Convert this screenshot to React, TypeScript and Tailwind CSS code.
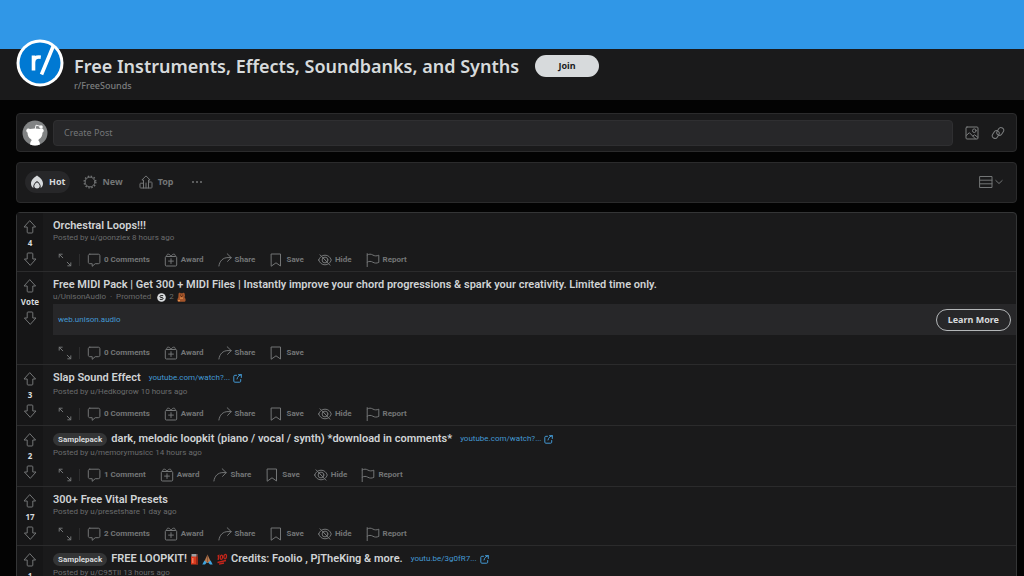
import type { ReactNode } from "react";

type IconProps = { className?: string };

function Svg({ className, children, box = "0 0 14 14" }: IconProps & { children: ReactNode; box?: string }) {
  return (
    <svg
      viewBox={box}
      className={className}
      fill="none"
      stroke="currentColor"
      strokeWidth={1}
      strokeLinejoin="round"
      strokeLinecap="round"
      aria-hidden="true"
    >
      {children}
    </svg>
  );
}

const ArrowUp = ({ className }: IconProps) => (
  <Svg className={className}>
    <path d="M7 .9 12.6 7H9.8v5.2c0 .5-.3.8-.8.8H5c-.5 0-.8-.3-.8-.8V7H1.4Z" />
  </Svg>
);

const ArrowDown = ({ className }: IconProps) => (
  <Svg className={className}>
    <path d="M7 13.1 1.4 7h2.8V1.8c0-.5.3-.8.8-.8h4c.5 0 .8.3.8.8V7h2.8Z" />
  </Svg>
);

const Expand = () => (
  <Svg className="size-3.5">
    <path d="M1.2 4.2v-3h3M1.2 1.2l3.600 3.600M12.800 9.800v3h-3M12.800 12.800 9.200 9.200" />
  </Svg>
);

const Comment = () => (
  <Svg className="size-3.5">
    <path d="M2.800 1.200h8.600c.9 0 1.500.6 1.500 1.500v6.500c0 .9-.6 1.500-1.500 1.500H8.200L5.200 13.300v-2.600H2.800c-.9 0-1.500-.6-1.500-1.500V2.700c0-.9.6-1.500 1.500-1.500Z" />
  </Svg>
);

const Gift = () => (
  <Svg className="size-3.5">
    <path d="M2.300 3.500h9.400c.6 0 1 .4 1 1V12c0 .6-.4 1-1 1H2.300c-.6 0-1-.4-1-1V4.500c0-.6.4-1 1-1ZM7 5.700v4.800M4.600 8.100h4.800M2.700 3.500C2.500 1.800 3.300 1 4.500 1.200S6.500 2.300 7 3.500M11.300 3.500c.2-1.700-.6-2.500-1.800-2.300S7.500 2.300 7 3.500" />
  </Svg>
);

const Share = () => (
  <Svg className="size-3.5">
    <path d="M9.200.8 13.200 4.600 9.600 8.400M13.200 4.600H10C5 4.600 1.600 7.800.9 13" />
  </Svg>
);

const Bookmark = () => (
  <Svg className="size-3.5">
    <path d="M2.500 1h9v12L7 9.800 2.500 13Z" />
  </Svg>
);

const Hide = () => (
  <Svg className="size-3.5">
    <path d="M.7 7C1.700 4 4 2.200 7 2.200S12.300 4 13.300 7C12.300 10 10 11.800 7 11.800S1.700 10 .7 7Z" />
    <circle cx="7" cy="7" r="2.900" />
    <path d="m2 1.800 10 10.400M5.600 5.400l3 3.200" />
  </Svg>
);

const Flag = () => (
  <Svg className="size-3.5">
    <path d="M1.200.6v13M1.200 2c2-1.200 3.700-1.100 5.600 0s3.800 1.200 6 .2v7.200c-2.200 1-4.100.9-6-.200s-3.600-1.200-5.600 0" />
  </Svg>
);

const External = () => (
  <Svg className="size-[9px]" box="0 0 9 9">
    <path d="M3.500 1.300H1.800c-.6 0-1 .4-1 1v4.900c0 .6.4 1 1 1h4.900c.6 0 1-.4 1-1V5.500M5.500.7h2.800v2.800M8.300.7C6.300 1.200 4.500 2.500 4 5" />
  </Svg>
);

const Flame = () => (
  <svg viewBox="0 0 14 14" className="size-3.5" aria-hidden="true">
    <path
      fill="currentColor"
      d="M7 .6c2.500 1.500 6 4.400 6 8 0 2-.9 3.500-2.400 4.500.7-2.700-.9-5-3.600-7-2.700 2-4.300 4.300-3.600 7C1.900 12.100 1 10.600 1 8.600c0-3.600 3.500-6.500 6-8Z"
    />
    <path fill="currentColor" d="M7 7.300c1.900 1.400 2.900 2.700 2.700 4.200-.2 1.200-1.200 2-2.700 2s-2.500-.8-2.700-2C4.100 10 5.100 8.700 7 7.300Z" />
  </svg>
);

const Burst = () => (
  <Svg className="size-3.5">
    <circle cx="7" cy="7" r="4.900" />
    <circle cx="7" cy="7" r="5.900" strokeWidth="1.300" strokeLinecap="butt" strokeDasharray="1.500 1.590" />
  </Svg>
);

const TopChart = () => (
  <Svg className="size-3.5">
    <path d="M4.500 8.200H1.700c-.4 0-.7.3-.7.700v3.400c0 .4.3.7.7.7h10.600c.4 0 .7-.3.7-.7V7.700c0-.4-.3-.7-.7-.7H9.500M4.500 13V5H2.900L7 .9 11.100 5H9.500v8M7 13V8" />
  </Svg>
);

const Picture = () => (
  <Svg className="size-3.5">
    <rect x="1" y="1" width="12" height="12" rx="1" />
    <circle cx="9.300" cy="4.700" r="1.800" />
    <path d="m1.200 9.500 3.200-2.800 6 6.100M8 10l1.600-1.200 3.200 2.500" />
  </Svg>
);

const Chain = () => (
  <Svg className="size-3.5">
    <g transform="rotate(-58 7 7)">
      <rect x=".4" y="3.200" width="8.200" height="5.400" rx="2.700" />
      <rect x="5.400" y="5.400" width="8.200" height="5.400" rx="2.700" />
    </g>
  </Svg>
);

const Layout = () => (
  <Svg className="size-3.5">
    <path d="M1 1.500h12v11H1zM1 5.200h12M1 8.800h12" />
  </Svg>
);

const Chevron = () => (
  <Svg className="size-2" box="0 0 8 8">
    <path d="m.8 2.500 3.200 3 3.200-3" />
  </Svg>
);

function Avatar() {
  return (
    <svg viewBox="0 0 26 26" className="size-[26px] shrink-0" role="img" aria-label="Your avatar">
      <circle cx="13" cy="13" r="12.500" fill="#818384" />
      <g fill="#fff">
        <path d="M4.300 10.200c.4-1.700 2.300-2.200 3.700-1.200 3-.7 7-.7 10 0 1.400-1 3.300-.5 3.700 1.200.2 1-.3 1.900-1.200 2.300 0 3.400-1.400 5.600-3.700 6.800l-.4 1.400c1 .7 1.500 1.900 1.500 3.700-3 1.400-6.800 1.400-9.800 0 0-1.800.5-3 1.500-3.700l-.4-1.400c-2.300-1.200-3.700-3.400-3.700-6.800-.9-.4-1.400-1.300-1.200-2.300Z" />
        <circle cx="19" cy="7" r="1.800" />
      </g>
      <path d="M13.200 9 14 5.200l4 1" fill="none" stroke="#fff" strokeWidth=".9" />
    </svg>
  );
}

function Action({ icon, label }: { icon: ReactNode; label: string }) {
  return (
    <button type="button" className="flex items-center gap-[3px]">
      {icon}
      <span>{label}</span>
    </button>
  );
}

type Post = {
  score: string;
  title: ReactNode;
  meta: ReactNode;
  comments: string;
  flair?: string;
  link?: string;
  promoted?: boolean;
};

function PostRow({ post, first }: { post: Post; first: boolean }) {
  return (
    <article className={first ? "flex" : "flex border-t border-[#2b2b2c]"}>
      <div className="flex w-[26px] shrink-0 flex-col items-center gap-1 bg-[#161617] pt-[7px] text-[#737576]">
        <button type="button" aria-label="Upvote">
          <ArrowUp className="size-3.5" />
        </button>
        <span className="font-['Noto_Sans'] text-[8px] leading-[10px] font-bold whitespace-nowrap text-[#d7dadc]">
          {post.score}
        </span>
        <button type="button" aria-label="Downvote">
          <ArrowDown className="size-3.5" />
        </button>
      </div>
      <div className="min-w-0 flex-1 pt-1.5 pl-2.5">
        <div className="flex h-3.5 items-center whitespace-nowrap">
          {post.flair && (
            <span className="mr-1 rounded-full bg-[#343536] px-[5px] text-[8px] leading-[13px] font-bold text-[#d7dadc]">
              {post.flair}
            </span>
          )}
          <h2 className="text-[11px] leading-[14px] font-semibold text-[#d0d3d5]">{post.title}</h2>
          {post.link && (
            <a href="#link" className="ml-2 flex items-center gap-[3px] text-[8px] leading-[14px] text-[#4399d4]">
              {post.link}
              <External />
            </a>
          )}
        </div>
        <p
          className={
            post.link
              ? "mt-0.5 flex h-2.5 items-center text-[8px] leading-[10px] whitespace-nowrap text-[#6a6c6d]"
              : "flex h-2.5 items-center text-[8px] leading-[10px] whitespace-nowrap text-[#6a6c6d]"
          }
        >
          {post.meta}
        </p>
        {post.promoted && (
          <div className="mt-0.5 mb-px flex h-[31px] items-center justify-between bg-[#272729] pr-[5px] pl-[5px]">
            <a href="#unison" className="text-[8px] text-[#4399d4]">
              web.unison.audio
            </a>
            <button
              type="button"
              className="h-[22px] rounded-full border border-[#b4b7b9] px-[11px] font-['Noto_Sans'] text-[9px] font-bold text-[#d7dadc]"
            >
              Learn More
            </button>
          </div>
        )}
        <div
          className={
            post.promoted
              ? "mt-1.5 flex h-[23px] items-center gap-3.5 pl-[5px] text-[8px] font-bold whitespace-nowrap text-[#737576]"
              : "mt-[5px] flex h-[23px] items-center gap-3.5 pl-[5px] text-[8px] font-bold whitespace-nowrap text-[#737576]"
          }
        >
          <div className="flex items-center gap-[7px]">
            <button type="button" aria-label="Expand">
              <Expand />
            </button>
            <span className="h-3 w-px bg-[#2d2d2e]" />
            <Action icon={<Comment />} label={post.comments} />
          </div>
          <Action icon={<Gift />} label="Award" />
          <Action icon={<Share />} label="Share" />
          <Action icon={<Bookmark />} label="Save" />
          {!post.promoted && (
            <>
              <Action icon={<Hide />} label="Hide" />
              <Action icon={<Flag />} label="Report" />
            </>
          )}
        </div>
      </div>
    </article>
  );
}

const Can = () => (
  <svg viewBox="0 0 9 12" className="h-3 w-[9px]" aria-hidden="true">
    <path fill="#9aa0a3" d="M1.500 1h6v3h-6z" />
    <path fill="#d93a1e" d="M1 3.500h7v8H1z" />
    <path fill="#f0785a" d="M2 5h1.500v5H2z" />
    <path fill="#5a1a12" d="M6.500 1h1v10h-1z" />
  </svg>
);

const Hands = () => (
  <svg viewBox="0 0 11 12" className="h-3 w-[11px]" aria-hidden="true">
    <path fill="#b77a50" d="M5.500 1.500 8.700 8.500 5.500 10 2.300 8.500Z" />
    <path stroke="#6b4028" strokeWidth=".6" d="M5.500 2v7" />
    <path fill="#3da4e0" d="m2.400 7.500 2.400 2L3 11.500H.3zM8.600 7.500l-2.400 2L8 11.500h2.700z" />
  </svg>
);

const Hundred = () => (
  <svg viewBox="0 0 12 12" className="size-3" fill="none" stroke="#c4251b" strokeWidth="1.300" aria-hidden="true">
    <path d="m1.500 3.200 1.200-.7L2.200 7M1.500 9.500l8.500-2M3 11.200l5-1.200" />
    <ellipse cx="5.400" cy="4.300" rx="1.200" ry="2.100" transform="rotate(10 5.400 4.300)" />
    <ellipse cx="9.200" cy="3.600" rx="1.300" ry="2.200" transform="rotate(10 9.200 3.600)" />
  </svg>
);

const SilverAward = () => (
  <svg viewBox="0 0 9 9" className="size-[9px]" role="img" aria-label="Silver award">
    <circle cx="4.500" cy="4.500" r="4.300" fill="#d9dcde" />
    <path d="M6.200 2.600H4c-1.500 0-1.500 1.800 0 1.900h1c1.500.1 1.500 1.900 0 1.900H2.800" fill="none" stroke="#222" strokeWidth="1" />
  </svg>
);

const BearAward = () => (
  <svg viewBox="0 0 9 10" className="h-2.5 w-[9px]" role="img" aria-label="Bear hug award">
    <path fill="#a5552a" d="M1.500 2C1.500.7 3 .5 3.500 1.200h2C6.500 0 8 1 7.700 2.500c.5 1 .3 2-.3 2.600 1.500 1.500 1.700 4.400.2 4.700H1.500C0 9.500 0 7 1.300 5.500Z" />
    <path fill="#e08f4c" d="M3 5.500h3v1.200H3zM1 8h2v1.200H1z" />
    <path fill="#3a1b0c" d="M3 2.700h.9v.9H3zM5.300 2.700h.9v.9h-.9zM4 4h1.200v.8H4z" />
  </svg>
);

const posts: Post[] = [
  { score: "4", title: "Orchestral Loops!!!", meta: "Posted by u/goonziex 8 hours ago", comments: "0 Comments" },
  {
    score: "Vote",
    title:
      "Free MIDI Pack | Get 300 + MIDI Files | Instantly improve your chord progressions & spark your creativity. Limited time only.",
    meta: (
      <>
        <span>u/UnisonAudio</span>
        <span className="mx-1">·</span>
        <span className="mr-1.5">Promoted</span>
        <SilverAward />
        <span className="mx-[3px]">2</span>
        <BearAward />
      </>
    ),
    comments: "0 Comments",
    promoted: true,
  },
  {
    score: "3",
    title: "Slap Sound Effect",
    meta: "Posted by u/Hedkogrow 10 hours ago",
    comments: "0 Comments",
    link: "youtube.com/watch?...",
  },
  {
    score: "2",
    title: "dark, melodic loopkit (piano / vocal / synth) *download in comments*",
    meta: "Posted by u/memorymusicc 14 hours ago",
    comments: "1 Comment",
    flair: "Samplepack",
    link: "youtube.com/watch?...",
  },
  { score: "17", title: "300+ Free Vital Presets", meta: "Posted by u/presetshare 1 day ago", comments: "2 Comments" },
  {
    score: "1",
    title: (
      <span className="flex items-center gap-[3px]">
        FREE LOOPKIT! <Can />
        <Hands />
        <Hundred /> Credits: Foolio , PjTheKing &amp; more.
      </span>
    ),
    meta: "Posted by u/C95TII 13 hours ago",
    comments: "0 Comments",
    flair: "Samplepack",
    link: "youtu.be/3g0fR7...",
  },
];

export default function App() {
  return (
    <div className="h-screen overflow-hidden bg-[#030303] font-['Roboto',sans-serif] text-[#d7dadc]">
      <div className="h-[49px] bg-[#3097e7]" />
      <header className="flex h-[51px] bg-[#1a1a1b] pl-4">
        <div className="relative -top-2.5 size-12 shrink-0">
          <svg viewBox="0 0 48 48" className="size-12" role="img" aria-label="r/FreeSounds">
            <circle cx="24" cy="24" r="23.500" fill="#fff" />
            <circle cx="24" cy="24" r="20.500" fill="#0079d3" />
            <path
              d="M17.500 31.500V16.500M17.500 23.500c0-4 2.400-6 7.300-5.300M37.500 6.500 25.500 35.500"
              fill="none"
              stroke="#fff"
              strokeWidth="3.600"
            />
          </svg>
        </div>
        <div className="ml-2.5 pt-[5px]">
          <div className="flex items-center gap-4">
            <h1 className="font-['Noto_Sans'] text-[18px] leading-6 font-semibold whitespace-nowrap">
              Free Instruments, Effects, Soundbanks, and Synths
            </h1>
            <button
              type="button"
              className="h-[22px] w-16 rounded-full bg-[#d7dadc] font-['Noto_Sans'] text-[9px] font-bold text-[#1a1a1b]"
            >
              Join
            </button>
          </div>
          <p className="mt-0.5 font-['Noto_Sans'] text-[9px] leading-3 font-medium text-[#7c7e7f]">r/FreeSounds</p>
        </div>
      </header>

      <main className="flex flex-col pt-[13px] pr-[7px] pl-4">
        <form className="flex h-[39px] items-center rounded-sm border border-[#2b2b2c] bg-[#1a1a1b] pr-[11px] pl-[5px]">
          <Avatar />
          <input
            type="text"
            aria-label="Create Post"
            placeholder="Create Post"
            className="ml-[5px] h-[26px] min-w-0 flex-1 rounded-sm border border-[#2f2f31] bg-[#272729] px-2.5 font-['Noto_Sans'] text-[9px] placeholder:text-[#747678]"
          />
          <button type="button" aria-label="Create media post" className="ml-3 text-[#7c7e7f]">
            <Picture />
          </button>
          <button type="button" aria-label="Create link post" className="ml-3 text-[#7c7e7f]">
            <Chain />
          </button>
        </form>

        <nav className="mt-2.5 flex h-[41px] items-center rounded-sm border border-[#2b2b2c] bg-[#1a1a1b] pr-[13px] pb-px pl-2 font-['Noto_Sans'] text-[9px] font-bold text-[#737576]">
          <a href="#hot" className="flex h-[22px] items-center gap-[5px] rounded-full bg-[#272729] px-[5px] text-[#d7dadc]">
            <Flame />
            Hot
          </a>
          <a href="#new" className="ml-[13px] flex items-center gap-[5px]">
            <Burst />
            New
          </a>
          <a href="#top" className="ml-4 flex items-center gap-[5px]">
            <TopChart />
            Top
          </a>
          <button type="button" aria-label="More sort options" className="ml-[18px] flex gap-0.5">
            <span className="size-0.5 rounded-full bg-current" />
            <span className="size-0.5 rounded-full bg-current" />
            <span className="size-0.5 rounded-full bg-current" />
          </button>
          <button type="button" aria-label="Change layout" className="ml-auto flex items-center gap-0.5">
            <Layout />
            <Chevron />
          </button>
        </nav>

        <section aria-label="Posts" className="mt-[9px] rounded-t-sm border border-[#343536] bg-[#1a1a1b]">
          {posts.map((post, i) => (
            <PostRow key={i} post={post} first={i === 0} />
          ))}
        </section>
      </main>
    </div>
  );
}
